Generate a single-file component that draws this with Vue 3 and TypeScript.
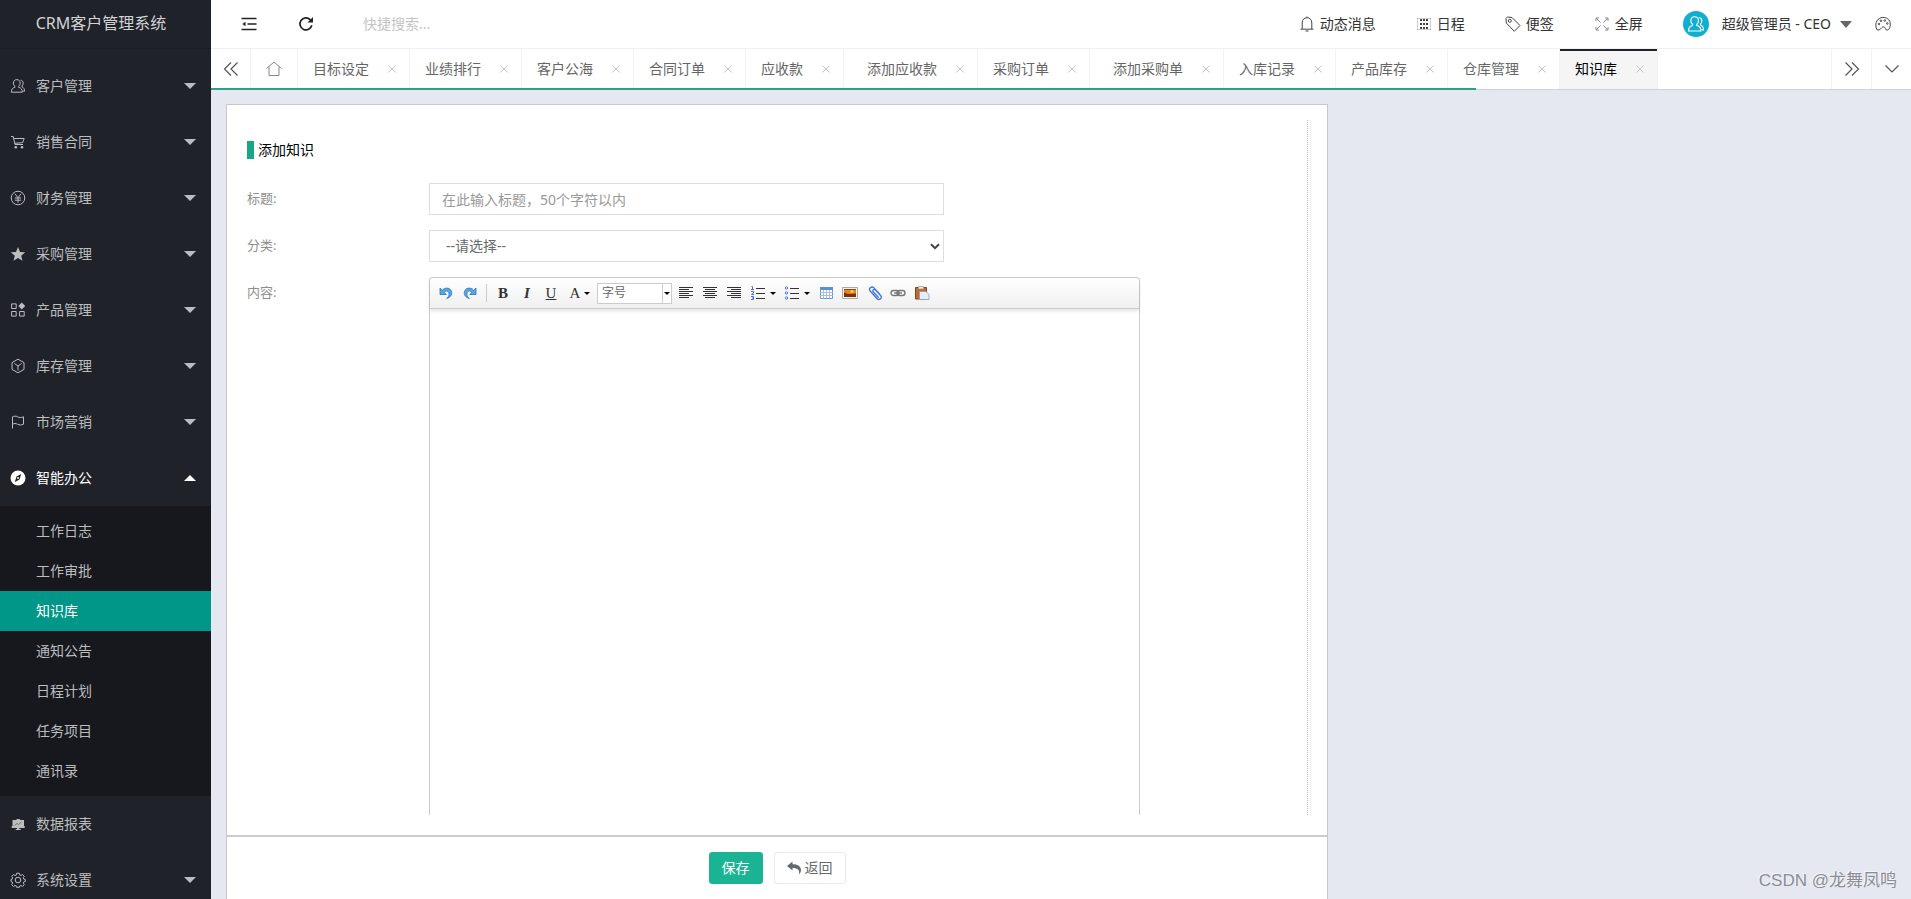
<script setup lang="ts">
import { ref } from 'vue'

interface MenuItem {
  label: string
  icon: string
  children?: string[]
  leaf?: boolean
}

const menu: MenuItem[] = [
  { label: '客户管理', icon: 'user' },
  { label: '销售合同', icon: 'cart' },
  { label: '财务管理', icon: 'yen' },
  { label: '采购管理', icon: 'star' },
  { label: '产品管理', icon: 'grid' },
  { label: '库存管理', icon: 'cube' },
  { label: '市场营销', icon: 'flag' },
  {
    label: '智能办公',
    icon: 'compass',
    children: ['工作日志', '工作审批', '知识库', '通知公告', '日程计划', '任务项目', '通讯录'],
  },
  { label: '数据报表', icon: 'chart', leaf: true },
  { label: '系统设置', icon: 'gear' },
]
const openMenu = ref('智能办公')
const activePage = ref('知识库')

function toggle(item: MenuItem) {
  if (item.leaf) return
  openMenu.value = openMenu.value === item.label ? '' : item.label
}

const tabs = ref([
  { label: '目标设定' },
  { label: '业绩排行' },
  { label: '客户公海' },
  { label: '合同订单' },
  { label: '应收款' },
  { label: '添加应收款', indent: true },
  { label: '采购订单' },
  { label: '添加采购单', indent: true },
  { label: '入库记录' },
  { label: '产品库存' },
  { label: '仓库管理' },
  { label: '知识库' },
])
const activeTab = ref('知识库')
function closeTab(label: string) {
  tabs.value = tabs.value.filter((t) => t.label !== label)
}

const keyword = ref('')
const title = ref('')
const category = ref('')
</script>

<template>
  <div class="app">
    <aside class="side">
      <div class="logo">CRM客户管理系统</div>
      <nav class="menu">
        <div v-for="item in menu" :key="item.label">
          <button
            type="button"
            class="menu-item"
            :class="{ open: item.children && openMenu === item.label }"
            @click="toggle(item)"
          >
            <svg class="menu-icon" viewBox="0 0 16 16" aria-hidden="true">
              <g v-if="item.icon === 'user'" class="ln">
                <path d="M6.800 1.600c2 0 3.400 1.400 3.400 3.500 0 1.300-.5 2.400-1.500 3.100v1.100c2.300.6 3.700 2 3.700 4.900H1.300c0-2.900 1.300-4.300 3.600-4.900V8.200C3.900 7.500 3.400 6.400 3.400 5.100c0-2.100 1.400-3.500 3.400-3.500z" />
                <path d="M10.600 2.200c1.600.2 2.600 1.400 2.600 3 0 1.200-.4 2.100-1.200 2.700v1c1.600.6 2.600 2 2.600 4.300h-1.500" />
              </g>
              <g v-else-if="item.icon === 'cart'">
                <path class="ln" d="M1 2.500h2.200l1.800 8h8M3.800 4.500h10.400l-1.600 4.200-8 .6" />
                <circle cx="5.800" cy="13.200" r="1.300" fill="currentColor" />
                <circle cx="12" cy="13.200" r="1.300" fill="currentColor" />
              </g>
              <g v-else-if="item.icon === 'yen'" class="ln">
                <circle cx="8" cy="8" r="6.800" />
                <path d="M5 3.800l3 4 3-4M8 7.800v5M4.800 8h6.400M4.800 10.200h6.400" />
              </g>
              <path v-else-if="item.icon === 'star'" fill="currentColor" d="M8 1l2 4.900 5.200.4-4 3.400 1.300 5.100L8 12l-4.500 2.800 1.300-5.100-4-3.400L6 5.900z" />
              <g v-else-if="item.icon === 'grid'">
                <path class="ln" d="M1.600 1.900h4.600v4.600H1.600zM1.600 9.500h4.600v4.600H1.600zM9.600 9.500h4.600v4.600H9.600z" />
                <path fill="currentColor" d="M11.800.6l3.400 3.400-3.400 3.400L8.400 4z" />
              </g>
              <path v-else-if="item.icon === 'cube'" class="ln" d="M8 1.200l6 3.400v6.800l-6 3.400-6-3.400V4.600zM4.500 5.500L8 8l3.500-2.500M8 8v4.500" />
              <path v-else-if="item.icon === 'flag'" class="ln" d="M2.500 14.500V2.800c1.700-.9 3.300-.9 5 0 2 1 3.800 1 6 0v7.400c-2.200 1-4 1-6 0-1.700-.9-3.300-.9-5 0" />
              <g v-else-if="item.icon === 'compass'">
                <circle cx="8" cy="8" r="7.500" fill="currentColor" />
                <path fill="#20222a" d="M11.200 4L9.500 9.400 4.800 12l1.700-5.400z" />
                <circle cx="8" cy="8" r="1" fill="#fff" />
              </g>
              <g v-else-if="item.icon === 'chart'">
                <path fill="currentColor" d="M2.500 4h3.700L7 3h2.500l.8 1h3.700v6h.7v2H9.300v1h1.500v1H5.700v-1H7v-1H1.700v-2h.8z" />
                <path fill="none" stroke="#777" d="M4.500 9.500l2.500-2 1.500 1 3-2.500" />
              </g>
              <g v-else class="ln">
                <circle cx="8" cy="8" r="2.800" />
                <path d="M6.700 1.200h2.600l.4 1.800 1.300.5 1.500-1 1.800 1.800-1 1.500.5 1.300 1.500.4v2l-1.500.4-.5 1.300 1 1.500-1.800 1.800-1.500-1-1.300.5-.4 1.300H6.700l-.4-1.300-1.300-.5-1.500 1-1.800-1.800 1-1.500-.5-1.300L1 9.500v-2l1.200-.4.5-1.300-1-1.500 1.800-1.800 1.500 1 1.300-.5z" />
              </g>
            </svg>
            <span>{{ item.label }}</span>
            <i v-if="!item.leaf" class="arrow"></i>
          </button>
          <div v-if="item.children && openMenu === item.label" class="submenu">
            <a
              v-for="child in item.children"
              :key="child"
              href="#"
              :class="{ current: activePage === child }"
              @click.prevent="activePage = child"
            >{{ child }}</a>
          </div>
        </div>
      </nav>
    </aside>

    <div class="main">
      <header class="top">
        <button type="button" class="tool" aria-label="收起菜单">
          <svg width="16" height="16" viewBox="0 0 16 16" fill="none" stroke="#222" stroke-width="1.500">
            <path d="M.5 2.500h15M6.500 8h9M.5 13.500h15" />
            <path d="M4.500 5.800v4.400L1.300 8z" fill="#222" stroke="none" />
          </svg>
        </button>
        <button type="button" class="tool" aria-label="刷新">
          <svg width="16" height="16" viewBox="0 0 16 16" fill="none" stroke="#222" stroke-width="1.700">
            <path d="M13.800 9.200A6 6 0 1 1 12.200 3.700L14 5.500" />
            <path d="M15 1v5.500H9.500z" fill="#222" stroke="none" />
          </svg>
        </button>
        <input v-model="keyword" class="search" type="text" placeholder="快捷搜索..." aria-label="快捷搜索" />
        <div class="links">
          <a href="#">
            <svg viewBox="0 0 16 16"><path d="M1.500 13.200h13M3.200 13V7c0-3.200 2-5.300 4.800-5.300S12.800 3.800 12.800 7v6M6.500 15h3M8 .5v1.200" /></svg>
            动态消息
          </a>
          <a href="#">
            <svg viewBox="0 0 16 16"><path d="M1.500 2v12M14.500 2v12M1 2.500h14M1 13.500h14" opacity=".25" /><path stroke-width="2" stroke-dasharray="2 2" d="M5 3v10M8 3v10M11 3v10" /></svg>
            日程
          </a>
          <a href="#">
            <svg viewBox="0 0 16 16"><path d="M1 2.500L1.300 7l8 8.300 5.700-5.800-8-8L2.500 1z" /><circle cx="4.800" cy="4.800" r="1.500" /></svg>
            便签
          </a>
          <a href="#">
            <svg viewBox="0 0 16 16" class="thin"><path d="M6.500 6.500L2.500 2.500M2 5V2h3M9.500 6.500l4-4M11 2h3v3M6.500 9.500l-4 4M2 11v3h3M9.500 9.500l4 4M14 11v3h-3" /></svg>
            全屏
          </a>
          <a href="#" class="account">
            <span class="avatar">
              <svg viewBox="0 0 16 16">
                <path d="M6.800 1.600c2 0 3.400 1.400 3.400 3.500 0 1.300-.5 2.400-1.500 3.100v1.100c2.300.6 3.700 2 3.700 4.900H1.300c0-2.900 1.300-4.300 3.600-4.900V8.200C3.900 7.500 3.400 6.400 3.400 5.100c0-2.100 1.400-3.500 3.400-3.500z" />
                <path d="M10.600 2.200c1.600.2 2.600 1.400 2.600 3 0 1.200-.4 2.100-1.200 2.700v1c1.600.6 2.600 2 2.600 4.300h-1.500" />
              </svg>
            </span>
            <span>超级管理员 - CEO</span>
            <i class="caret"></i>
          </a>
          <button type="button" class="theme" aria-label="主题">
            <svg viewBox="0 0 16 16"><path d="M1.800 13.500C-.3 9 1 3.200 6 1.700c5-1.400 9.300 2 9.300 6.300 0 4-1.500 6-3.300 6-2.200 0-1.400-3.200-3.600-3.200-2.200 0-3.100 4.700-6.600 2.700z" /><circle cx="4" cy="8" r=".8" /><circle cx="6" cy="4.800" r=".8" /><circle cx="9.800" cy="4.500" r=".8" /><circle cx="12.300" cy="7.500" r=".8" /></svg>
          </button>
        </div>
      </header>

      <div class="tabs">
        <button type="button" class="end" aria-label="向左">
          <svg viewBox="0 0 16 16"><path d="M8 1.500L1.500 8 8 14.500M14.500 1.500L8 8l6.500 6.500" /></svg>
        </button>
        <button type="button" class="home" aria-label="主页">
          <svg viewBox="0 0 16 16"><path d="M.5 7.500L8 1l7.500 6.500M3 5.500v9h10v-9" /></svg>
        </button>
        <div
          v-for="tab in tabs"
          :key="tab.label"
          class="tab"
          :class="{ active: activeTab === tab.label, indent: tab.indent }"
        >
          <a href="#" @click.prevent="activeTab = tab.label">{{ tab.label }}</a>
          <button type="button" aria-label="关闭" @click="closeTab(tab.label)">
            <svg viewBox="0 0 8 8"><path d="M.5.5l7 7M7.500.5l-7 7" /></svg>
          </button>
        </div>
        <span class="space"></span>
        <button type="button" class="end right" aria-label="向右">
          <svg viewBox="0 0 16 16"><path d="M1.500 1.500L8 8l-6.500 6.500M8 1.500L14.500 8 8 14.500" /></svg>
        </button>
        <button type="button" class="end right" aria-label="更多">
          <svg viewBox="0 0 16 16"><path d="M1.500 4.500L8 11l6.500-6.500" /></svg>
        </button>
        <div class="progress"></div>
      </div>

      <main class="content">
        <section class="card">
          <form class="body" @submit.prevent>
            <h1>添加知识</h1>
            <div class="row">
              <label for="title">标题:</label>
              <input id="title" v-model="title" class="field" type="text" maxlength="50" placeholder="在此输入标题，50个字符以内" />
            </div>
            <div class="row">
              <label for="category">分类:</label>
              <div class="select">
                <select id="category" v-model="category" class="field">
                  <option value="">--请选择--</option>
                </select>
                <svg viewBox="0 0 10 7"><path d="M1 1.200l4 4 4-4" /></svg>
              </div>
            </div>
            <div class="row grow">
              <label for="editor">内容:</label>
              <div class="editor">
                <div class="bar">
                  <button type="button" aria-label="撤销">
                    <svg viewBox="0 0 16 16"><path fill="#5aa5e6" stroke="#2b74c4" stroke-width=".8" d="M2 3v6.500h6.300L6.200 7.300C8 5 11.200 6 11 9.300c0 1.700-.8 3-2.300 4.200C12.500 12.300 14 10 13.700 7.400 13.200 2.800 7.500 1.600 4.300 5.200z" /></svg>
                  </button>
                  <button type="button" aria-label="重做">
                    <svg viewBox="0 0 16 16"><path fill="#5aa5e6" stroke="#2b74c4" stroke-width=".8" d="M14 3v6.500H7.700l2.100-2.200C8 5 4.800 6 5 9.300c0 1.700.8 3 2.300 4.200C3.500 12.300 2 10 2.300 7.400 2.800 2.800 8.500 1.600 11.700 5.200z" /></svg>
                  </button>
                  <i class="sep"></i>
                  <button type="button" class="serif bold">B</button>
                  <button type="button" class="serif bold italic">I</button>
                  <button type="button" class="serif under">U</button>
                  <button type="button" class="serif drop">A<i class="down"></i></button>
                  <button type="button" class="combo"><span>字号</span><b><i class="down"></i></b></button>
                  <button type="button" aria-label="左对齐">
                    <svg viewBox="0 0 16 16" stroke="#333"><path d="M1 2.500h14M1 4.500h10M1 6.500h14M1 8.500h10M1 10.500h14M1 12.500h10" /></svg>
                  </button>
                  <button type="button" aria-label="居中">
                    <svg viewBox="0 0 16 16" stroke="#333"><path d="M1 2.500h14M3 4.500h10M1 6.500h14M3 8.500h10M1 10.500h14M3 12.500h10" /></svg>
                  </button>
                  <button type="button" aria-label="右对齐">
                    <svg viewBox="0 0 16 16" stroke="#333"><path d="M1 2.500h14M5 4.500h10M1 6.500h14M5 8.500h10M1 10.500h14M5 12.500h10" /></svg>
                  </button>
                  <button type="button" class="drop" aria-label="编号列表">
                    <svg viewBox="0 0 16 16"><path stroke="#333" d="M6 3.500h9M6 8.500h9M6 13.500h9" /><path stroke="#4a6ee0" fill="none" d="M1.500 1.500h1v3M1 4.500h3M1 6.500h2.500v1.500L1.500 9.500H4M1 11.500h2.500v3H1M2 13h1.500" /></svg>
                    <i class="down"></i>
                  </button>
                  <button type="button" class="drop" aria-label="项目列表">
                    <svg viewBox="0 0 16 16"><path stroke="#333" d="M6 3.500h9M6 8.500h9M6 13.500h9" /><g stroke="#4a6ee0" fill="#fff"><circle cx="2.500" cy="3" r="1.200" /><circle cx="2.500" cy="8" r="1.200" /><circle cx="2.500" cy="13" r="1.200" /></g></svg>
                    <i class="down"></i>
                  </button>
                  <button type="button" aria-label="表格">
                    <svg viewBox="0 0 16 16"><path fill="#fff" stroke="#6f97cc" d="M2.500 2.500h12v11h-12z" /><path fill="#5b8fd6" d="M2 2h13v3H2z" /><path stroke="#a5c0e4" d="M2.500 7.500h12M2.500 10.500h12M5.500 5v8.500M8.500 5v8.500M11.500 5v8.500" /></svg>
                  </button>
                  <button type="button" aria-label="图片">
                    <svg viewBox="0 0 16 16"><path fill="#f4f4f4" stroke="#aaa" d="M.5 2.500h15v11H.5z" /><path fill="#a3400c" d="M2 4h12v8H2z" /><path fill="#e8841a" d="M2 5h12v4H2z" /><circle cx="10" cy="6.500" r="1.500" fill="#ffd04b" /><path fill="#7a3208" d="M2 7.500l4 1.500 8-.5V12H2z" /></svg>
                  </button>
                  <button type="button" aria-label="附件">
                    <svg viewBox="0 0 16 16"><path fill="none" stroke="#4579d2" stroke-width="1.400" stroke-linecap="round" d="M13.500 9L8 2.900C5.700.8 2.300 3.300 4 5.800l6.800 7.700c2.300 2.300 5.700-.3 4-2.800L9.500 5C8 3.500 6 5.200 7.200 6.700l5 5.600" /></svg>
                  </button>
                  <button type="button" aria-label="链接">
                    <svg viewBox="0 0 16 16" fill="none" stroke="#777" stroke-width="1.400"><rect x="1" y="5.500" width="8" height="5" rx="2.500" /><rect x="7" y="5.500" width="8" height="5" rx="2.500" /><path d="M4 8h8" /></svg>
                  </button>
                  <button type="button" aria-label="粘贴">
                    <svg viewBox="0 0 16 16"><path fill="#c06a2d" stroke="#8a4414" d="M1.500 2.500h11v11.500h-11z" /><path fill="#eee" stroke="#999" stroke-width=".8" d="M4.500 1.500h5v2.500h-5z" /><path fill="#e6eefa" stroke="#8899b5" stroke-width=".8" d="M5.500 6.500H12L15 9.500v5H5.500z" /></svg>
                  </button>
                </div>
                <textarea id="editor" class="area"></textarea>
              </div>
            </div>
          </form>
          <footer class="foot">
            <button type="button" class="btn save">保存</button>
            <button type="button" class="btn back">
              <svg viewBox="0 0 14 14"><path d="M0 5L5.500.5v2.700C10.500 3.200 14 5 14 9c0 1.800-.8 3.200-2 4.300C12.800 9 11 6.900 5.500 6.900v2.600z" /></svg>
              返回
            </button>
          </footer>
        </section>
      </main>
    </div>
    <div class="watermark">CSDN @龙舞凤鸣</div>
  </div>
</template>

<style>
body {
  margin: 0;
}
</style>

<style scoped>
* {
  box-sizing: border-box;
}
.app {
  display: flex;
  height: 100vh;
  overflow: hidden;
  position: relative;
  background: #e5e8f1;
  color: #333;
  font: 14px/20px "Noto Sans", "Noto Sans CJK SC", sans-serif;
}
button,
input,
select,
textarea {
  font: inherit;
  color: inherit;
  margin: 0;
  padding: 0;
  border: 0;
  background: none;
  outline: none;
}
a {
  color: inherit;
  text-decoration: none;
}
svg {
  display: block;
  flex: none;
}

.side {
  width: 211px;
  flex: none;
  background: #20222a;
  color: #bcbdbf;
}
.logo {
  height: 49px;
  line-height: 46px;
  font-size: 16px;
  padding-right: 9px;
  text-align: center;
  color: #d2d3d4;
  border-bottom: 1px solid #1b1d24;
}
.menu {
  padding-top: 9px;
}
.menu-item {
  display: flex;
  align-items: center;
  gap: 10px;
  width: 100%;
  height: 56px;
  padding: 0 15px 0 10px;
  text-align: left;
}
.menu-icon {
  width: 16px;
  height: 16px;
}
.ln {
  fill: none;
  stroke: currentColor;
  stroke-width: 1;
}
.arrow {
  margin-left: auto;
  border: 6px solid transparent;
  border-top-color: currentColor;
  border-bottom-width: 0;
}
.open {
  color: #fff;
}
.open .arrow {
  border-top-width: 0;
  border-bottom: 6px solid currentColor;
}
.submenu {
  padding: 5px 0;
  background: #16181d;
}
.submenu a {
  display: block;
  height: 40px;
  line-height: 40px;
  padding-left: 36px;
}
.submenu .current {
  background: #009688;
  color: #fff;
}

.main {
  flex: 1;
  min-width: 0;
  display: flex;
  flex-direction: column;
}
.top {
  display: flex;
  align-items: center;
  height: 49px;
  flex: none;
  padding: 0 20px 0 9px;
  background: #fff;
  border-bottom: 1px solid #f0f0f0;
}
.tool {
  display: flex;
  justify-content: center;
  width: 57px;
}
.search {
  width: 200px;
  margin-left: 29px;
}
.search::placeholder {
  color: #c4c4c4;
}
.links {
  display: flex;
  align-items: center;
  gap: 40px;
  margin-left: auto;
}
.links a {
  display: flex;
  align-items: center;
  gap: 5px;
}
.links svg {
  width: 16px;
  height: 16px;
  fill: none;
  stroke: #444;
  stroke-width: 1;
}
.links .thin {
  stroke: #888;
}
.links .avatar {
  display: flex;
  align-items: center;
  justify-content: center;
  width: 26px;
  height: 26px;
  margin-right: 8px;
  border-radius: 50%;
  background: #10aed0;
}
.avatar svg {
  width: 18px;
  height: 18px;
  stroke: #fff;
}
.caret {
  margin-left: 4px;
  border: 6px solid transparent;
  border-top: 7px solid #666;
  border-bottom-width: 0;
}
.theme {
  margin-left: -17px;
}

.tabs {
  position: relative;
  display: flex;
  height: 41px;
  flex: none;
  background: #fff;
  border-bottom: 1px solid #cfd1d8;
  color: #666;
}
.tabs svg {
  fill: none;
  stroke: #555;
  stroke-width: 1.2;
  width: 16px;
  height: 16px;
}
.end,
.home {
  display: flex;
  align-items: center;
  justify-content: center;
  width: 40px;
  flex: none;
  border-right: 1px solid #f3f3f3;
}
.home {
  width: 47px;
}
.home svg {
  stroke: #888;
  stroke-width: 1;
}
.right {
  border-right: 0;
  border-left: 1px solid #f3f3f3;
}
.tab {
  display: flex;
  align-items: center;
  gap: 18px;
  padding: 0 12px 0 15px;
  border-right: 1px solid #f3f3f3;
  white-space: nowrap;
}
.tab button {
  padding: 0 1px;
}
.tabs .tab svg {
  width: 8px;
  height: 8px;
  stroke: #c4c4c4;
  stroke-width: 1;
}
.indent {
  padding-left: 23px;
}
.active {
  background: #f5f5f5;
  color: #000;
  box-shadow: inset 0 2px #20222a;
}
.space {
  flex: 1;
}
.progress {
  position: absolute;
  left: 0;
  bottom: -1px;
  width: 74.4%;
  height: 2px;
  background: #2ba284;
}

.content {
  flex: 1;
  min-height: 0;
  display: flex;
  padding: 14px 15px 0;
}
.card {
  width: 66%;
  display: flex;
  flex-direction: column;
  background: #fff;
  border: 1px solid #c6c8ce;
  border-bottom: 0;
}
.body {
  position: relative;
  flex: 1;
  min-height: 0;
  display: flex;
  flex-direction: column;
  margin: 15px 16px 20px 20px;
  padding-top: 20px;
}
.body::after {
  content: "";
  position: absolute;
  top: 0;
  right: 0;
  bottom: 0;
  width: 2px;
  border-left: 1px dotted #bbb;
  border-right: 1px dotted #e4e4e4;
}
h1 {
  display: flex;
  align-items: center;
  gap: 4px;
  margin: 0 0 23px;
  font: inherit;
  color: #000;
}
h1::before {
  content: "";
  width: 7px;
  height: 18px;
  background: #1aa788;
}
.row {
  display: flex;
  margin-bottom: 15px;
}
.row label {
  width: 182px;
  flex: none;
  font-size: 13px;
  line-height: 30px;
  color: #8e8e8e;
}
.grow {
  flex: 1;
  min-height: 0;
  margin: 0;
}
.field {
  width: 515px;
  max-width: 100%;
  height: 32px;
  padding: 0 12px;
  border: 1px solid #dcdee0;
  background: #fff;
}
.field::placeholder {
  color: #999;
}
.select {
  position: relative;
  width: 515px;
  max-width: 100%;
}
.select .field {
  width: 100%;
  padding: 0 16px;
  color: #676a6c;
  appearance: none;
}
.select svg {
  position: absolute;
  right: 4px;
  top: 13px;
  width: 10px;
  height: 7px;
  fill: none;
  stroke: #444;
  stroke-width: 2;
  pointer-events: none;
}
.editor {
  width: 711px;
  display: flex;
  flex-direction: column;
  border: 1px solid #ccc;
  border-bottom: 0;
  border-radius: 4px 4px 0 0;
}
.bar {
  display: flex;
  align-items: center;
  height: 31px;
  flex: none;
  padding-left: 4px;
  border-bottom: 1px solid #ccc;
  border-radius: 4px 4px 0 0;
  background: linear-gradient(#fff, #f0f0f0);
  box-shadow: 0 2px 4px rgba(0, 0, 0, 0.12);
}
.bar button {
  display: flex;
  align-items: center;
  justify-content: center;
  gap: 4px;
  width: 24px;
  height: 20px;
  flex: none;
}
.bar svg {
  width: 16px;
  height: 16px;
}
.bar .drop {
  width: 34px;
}
.sep {
  width: 1px;
  height: 18px;
  margin: 0 4px;
  background: #ccc;
}
.serif {
  font-family: "Liberation Serif", serif;
  font-size: 15px;
  color: #333;
}
.bold {
  font-weight: 700;
}
.italic {
  font-style: italic;
}
.under {
  text-decoration: underline;
}
.down {
  border: 3px solid transparent;
  border-top-color: #000;
  border-bottom-width: 0;
}
.bar .combo {
  justify-content: space-between;
  width: 75px;
  height: 21px;
  margin-right: 2px;
  padding-left: 4px;
  border: 1px solid #ccc;
  background: #fff;
  font-size: 12px;
  color: #666;
}
.combo b {
  display: flex;
  align-items: center;
  height: 100%;
  padding: 0 1px;
  border-left: 1px solid #ccc;
}
.area {
  flex: 1;
  width: 100%;
  padding: 8px;
  resize: none;
}
.foot {
  display: flex;
  justify-content: center;
  gap: 11px;
  height: 64px;
  flex: none;
  padding-top: 15px;
  border-top: 2px solid #ccc;
}
.btn {
  display: flex;
  align-items: center;
  gap: 4px;
  height: 32px;
  padding: 0 12px;
  border: 1px solid #e7eaec;
  border-radius: 3px;
  color: #676a6c;
}
.btn svg {
  width: 14px;
  height: 14px;
  fill: #676a6c;
}
.save {
  border-color: #1ab394;
  background: #1ab394;
  color: #fff;
}
.watermark {
  position: absolute;
  right: 14px;
  bottom: 6px;
  font-family: "Liberation Sans", "Noto Sans CJK SC", sans-serif;
  font-size: 17px;
  line-height: 24px;
  color: #8b8d94;
  text-shadow: -1px -1px #f4f6fb;
}
</style>
